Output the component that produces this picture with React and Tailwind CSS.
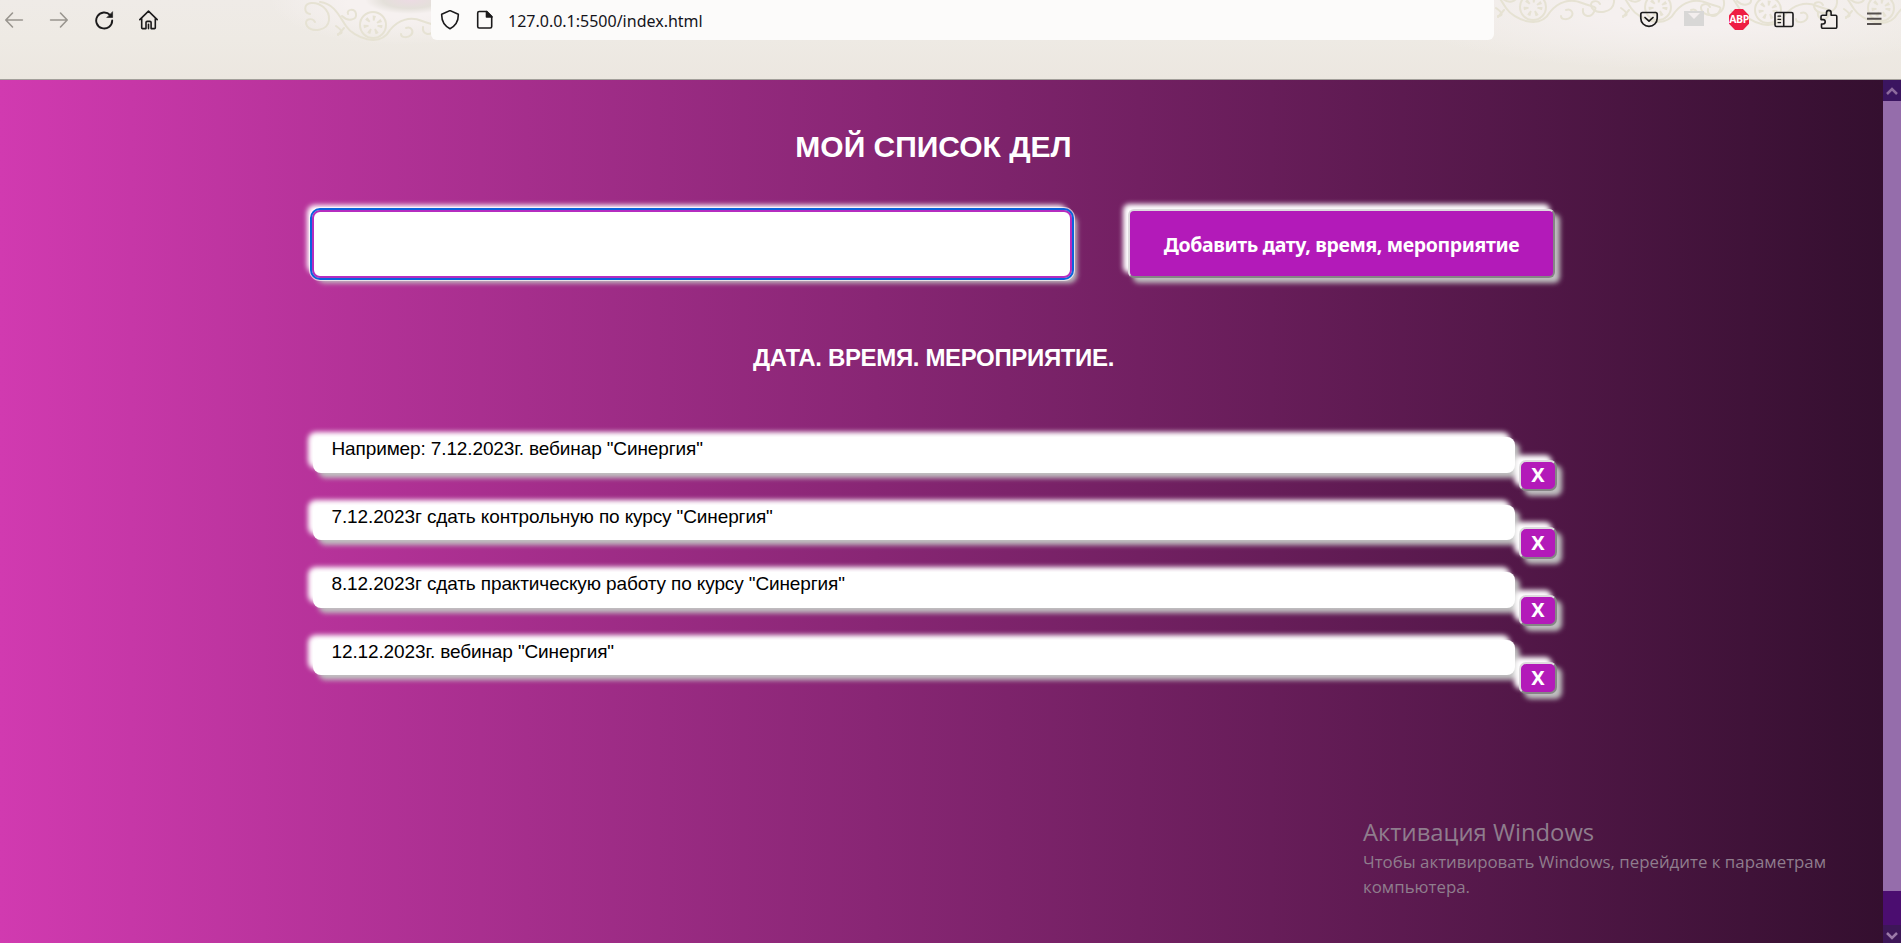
import React from "react";

const items = [
  'Например: 7.12.2023г. вебинар "Синергия"',
  '7.12.2023г сдать контрольную по курсу "Синергия"',
  '8.12.2023г сдать практическую работу по курсу "Синергия"',
  '12.12.2023г. вебинар "Синергия"',
];

function Icon({ children, className = "text-[#1b1a1b]" }) {
  return (
    <svg
      viewBox="0 0 20 20"
      className={"h-5 w-5 shrink-0 " + className}
      fill="none"
      stroke="currentColor"
      strokeWidth="1.6"
      strokeLinecap="round"
      strokeLinejoin="round"
    >
      {children}
    </svg>
  );
}

function Flourish({ className }) {
  return (
    <svg viewBox="0 0 140 44" className={className} fill="none" stroke="#e6e2d3" strokeWidth="2" strokeLinecap="round">
      <path d="M10 14c-6-1-7-10 1-11s19 6 18 17-18 13-22 6 5-9 8-4" />
      <path d="M20 2c14 2 18 12 26 24s34 22 44 4c8-10 20-14 32-9s16 2 12 9-12 4-11-3" />
      <path d="M48 14c-2-5 7-6 8 0s-8 8-14 2" />
      <path d="M106 28c6-2 8 4 5 7s-10 3-10-1M36 26c6 4 8 8 2 8M44 28l-6 7" />
      <circle cx="73" cy="25" r="13" />
      <circle cx="73" cy="25" r="7" strokeWidth="5" strokeDasharray="2.5 4" strokeLinecap="butt" />
    </svg>
  );
}

function BrowserBar() {
  return (
    <header className="relative flex h-20 shrink-0 items-start overflow-hidden border-b border-[#a39f9a] bg-[linear-gradient(180deg,#efebe7_0%,#eeeae4_50%,#ece7e0_100%)]">
      <div className="absolute inset-0 bg-[radial-gradient(ellipse_130px_45px_at_400px_0px,#f6f1f0_40%,transparent_100%),radial-gradient(ellipse_300px_60px_at_1690px_10px,#f5f0ef_30%,transparent_100%)]" />
      <div className="absolute left-[365px] top-[-14px] h-[28px] w-[90px] bg-[radial-gradient(closest-side,#ecdbe3_0%,#e4e0da_60%,transparent_100%)]" />
      <Flourish className="absolute left-[300px] top-0 h-11 w-[140px]" />
      <Flourish className="absolute left-[1460px] top-[-18px] h-11 w-[140px]" />
      <Flourish className="absolute left-[1585px] top-[-18px] h-11 w-[140px]" />
      <Flourish className="absolute left-[1695px] top-[-15px] h-11 w-[140px]" />
      <Flourish className="absolute left-[1808px] top-[-17px] h-11 w-[140px]" />

      <div className="relative flex h-10 w-[431px] gap-[25px] pl-1 pt-[10px]">
        <Icon className="text-[#99958f]"><path d="M18.4 10H2M8.5 3 1.8 10l6.700 7" /></Icon>
        <Icon className="text-[#99958f]"><path d="M1.6 10H18M11.5 3l6.700 7-6.700 7" /></Icon>
        <Icon>
          <path d="M16.2 5.2A8 8 0 1 0 18.2 10.5" strokeWidth="1.9" />
          <path d="M18.6 2v5.500h-5.500z" fill="currentColor" strokeWidth=".6" />
        </Icon>
        <Icon><path d="M.8 9.600 9.500 1.200l8.700 8.400M2.700 8.500v9.200q0 .9.900.9H7v-6q0-1.200 1.200-1.200h2.700q1.200 0 1.200 1.200v6h3.300q.9 0 .9-.9V8.500M9.500 14.200v4.400" /></Icon>
      </div>

      <div className="relative flex h-[39.500px] w-[1063px] gap-[15px] rounded-b-md bg-[#fcfbfa] pl-[9px] pt-[10px]">
        <Icon><path d="M10 .6 18.300 4.300c.2 6-2.200 11.300-8.300 14.400C3.900 15.600 1.500 10.300 1.700 4.300z" /></Icon>
        <Icon>
          <path d="M4.200 1.500h7.500l5 5v10q0 1.500-1.500 1.500h-11Q2.700 18 2.700 16.500V3q0-1.500 1.500-1.500z" />
          <path d="M11.500 1.500v5.500h5.500z" fill="currentColor" />
        </Icon>
        <span className="-ml-[2px] font-['Noto_Sans'] text-[16px] leading-[23px] text-[#15141a]">127.0.0.1:5500/index.html</span>
      </div>

      <div className="relative flex flex-1 gap-[25px] pl-[145px] pt-[9px]">
        <Icon><path d="M3.500 3.500h13q1.700 0 1.700 1.700v4a8.200 8.200 0 0 1-16.400 0v-4q0-1.700 1.700-1.700zM6 8.500l4 3.700 4-3.700" strokeWidth="1.700" /></Icon>
        <Icon className="text-[#d8d7d6]">
          <path d="M0 2h20v15H0z" fill="currentColor" stroke="none" />
          <path d="M4 4h12l-6 6z" fill="#f3eeee" stroke="none" />
        </Icon>
        <span className="flex h-[21px] w-5 shrink-0 items-center justify-center bg-[#ee1e43] font-['Open_Sans'] text-[10.500px] font-bold leading-none tracking-[-0.4px] text-white [clip-path:polygon(30%_0,70%_0,100%_30%,100%_70%,70%_100%,30%_100%,0_70%,0_30%)]">ABP</span>
        <Icon>
          <path d="M2.500 3.500h15q1.500 0 1.500 1.500v11q0 1.500-1.500 1.500h-15Q1 17.500 1 16V5q0-1.500 1.500-1.500zM9.700 3.500v14" />
          <path d="M4 7.200h2.600M4 10.400h2.600M4 13.600h2.600" strokeWidth="1.200" />
        </Icon>
        <Icon><path d="M2 7.700q0-1.500 1.500-1.500H7.500V3.700a2.300 2.300 0 0 1 4.600 0v2.500h4.400q1.300 0 1.300 1.300v10.500q0 1.300-1.300 1.300H3.800Q2.500 19.300 2.500 18v-3h1.500a2.200 2.200 0 0 0 0-4.400H2z" /></Icon>
        <Icon className="text-[#55504f]"><path d="M3 4.500h14.500M3 9.700h14.500M3 14.900h14.500" strokeWidth="2" strokeLinecap="butt" /></Icon>
      </div>
    </header>
  );
}

const raised = "shadow-[5px_5px_5px_#c0c0c0,-5px_-5px_5px_#ffffff]";
const button =
  "shrink-0 border-2 border-t-[#dedbde] border-l-[#dedbde] border-b-[#858585] border-r-[#858585] bg-[#b31ab9] text-center font-bold text-white font-['Noto_Sans'] " + raised;

function Scrollbar() {
  return (
    <div className="flex w-[18px] shrink-0 flex-col bg-[#4b0d70]">
      <div className="flex h-[21px] items-center justify-center bg-[#3b1560]">
        <svg viewBox="0 0 12 8" className="h-2 w-3" fill="none" stroke="#8d6b9d" strokeWidth="2.500"><path d="M1 7l5-5 5 5" /></svg>
      </div>
      <div className="h-[790px] bg-[#956dab]" />
      <div className="flex-1" />
      <div className="flex h-[18px] items-center justify-center bg-[#3d1657] pt-1">
        <svg viewBox="0 0 12 8" className="h-2 w-3" fill="none" stroke="#9b7aa8" strokeWidth="2.500"><path d="M1 1l5 5 5-5" /></svg>
      </div>
    </div>
  );
}

export default function App() {
  return (
    <div className="relative flex h-[943px] w-[1901px] flex-col overflow-hidden">
      <BrowserBar />
      <div className="flex min-h-0 flex-1">
        <main className="flex-1 bg-[linear-gradient(90deg,#d13ab0,#340f2f)] pl-[310px] font-['Liberation_Sans']">
          <h1 className="w-[1247px] pt-[49px] text-center text-[30px] font-bold leading-[36px] text-white">МОЙ СПИСОК ДЕЛ</h1>

          <div className="mt-[42px] flex h-[74px] w-[1247px] items-start">
            <div className="ml-[2px] mt-[3px] h-[68px] w-[760px] shrink-0 rounded-[8px] border-2 border-[#b52cc0] bg-white shadow-[0_0_0_3px_rgba(255,255,255,0.65),5px_5px_5px_#c0c0c0,-5px_-5px_5px_#ffffff] outline-2 outline-[#0a62dc]">
              <input className="h-full w-full bg-transparent outline-none" />
            </div>
            <button className={"ml-[56px] mt-[2px] h-[68.500px] w-[427px] rounded-[6px] pt-[2px] text-[19.500px] leading-none tracking-[-0.37px] " + button}>
              Добавить дату, время, мероприятие
            </button>
          </div>

          <h2 className="mt-[59px] w-[1247px] text-center text-[24px] font-bold leading-[36px] tracking-[-0.35px] text-white">ДАТА. ВРЕМЯ. МЕРОПРИЯТИЕ.</h2>

          <ul className="mt-[61px] pl-[2.500px]">
            {items.map((text) => (
              <li key={text} className="flex h-[67.600px] items-start">
                <div className={"h-[35.500px] w-[1202.500px] rounded-[8px] bg-white pl-[19px] text-[19px] leading-[23px] tracking-[-0.12px] text-black " + raised}>{text}</div>
                <button className={"ml-[4px] mt-[22.500px] h-[31.500px] w-[38px] rounded-[7px] text-[20px] leading-none " + button}>X</button>
              </li>
            ))}
          </ul>
        </main>
        <Scrollbar />
      </div>

      <aside className="absolute left-[1363px] top-[815px] w-[480px] font-['Open_Sans'] text-[#8f7d8d]">
        <p className="text-[23.800px] leading-[34px]">Активация Windows</p>
        <p className="text-[16.850px] leading-[25px]">
          Чтобы активировать Windows, перейдите к параметрам
          <br />
          компьютера.
        </p>
      </aside>
    </div>
  );
}
